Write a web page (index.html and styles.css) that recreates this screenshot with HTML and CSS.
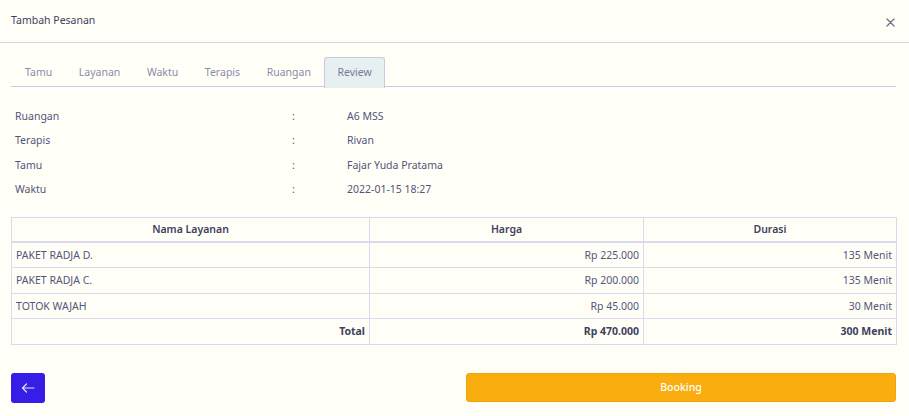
FILE: index.html
```html
<!DOCTYPE html>
<html>
<head>
<meta charset="utf-8">
<link rel="stylesheet" href="styles.css">
</head>
<body>
<div class="modal">
  <div class="modal-header">
    <span class="title">Tambah Pesanan</span>
    <span class="close">
      <svg width="9" height="9" viewBox="0 0 9 9"><path d="M1 1L8 8M8 1L1 8" stroke="#6f6d88" stroke-width="1.3" stroke-linecap="round"/></svg>
    </span>
  </div>
  <div class="modal-body">
    <ul class="tabs">
      <li class="tab">Tamu</li>
      <li class="tab">Layanan</li>
      <li class="tab">Waktu</li>
      <li class="tab">Terapis</li>
      <li class="tab">Ruangan</li>
      <li class="tab active">Review</li>
    </ul>
    <div class="info">
      <div class="row"><span class="lbl">Ruangan</span><span class="colon">:</span><span class="val">A6 MSS</span></div>
      <div class="row"><span class="lbl">Terapis</span><span class="colon">:</span><span class="val">Rivan</span></div>
      <div class="row"><span class="lbl">Tamu</span><span class="colon">:</span><span class="val">Fajar Yuda Pratama</span></div>
      <div class="row"><span class="lbl">Waktu</span><span class="colon">:</span><span class="val">2022-01-15 18:27</span></div>
    </div>
    <table class="tbl">
      <thead>
        <tr><th class="c1">Nama Layanan</th><th class="c2">Harga</th><th class="c3">Durasi</th></tr>
      </thead>
      <tbody>
        <tr><td>PAKET RADJA D.</td><td class="r">Rp 225.000</td><td class="r">135 Menit</td></tr>
        <tr><td>PAKET RADJA C.</td><td class="r">Rp 200.000</td><td class="r">135 Menit</td></tr>
        <tr><td>TOTOK WAJAH</td><td class="r">Rp 45.000</td><td class="r">30 Menit</td></tr>
        <tr class="total"><td class="r">Total</td><td class="r">Rp 470.000</td><td class="r">300 Menit</td></tr>
      </tbody>
    </table>
    <div class="actions">
      <button class="btn-back">
        <svg width="14" height="10" viewBox="0 0 14 10"><path d="M13 5H1.5M5.5 1L1.5 5L5.5 9" fill="none" stroke="#e8e4ff" stroke-width="1.2" stroke-linecap="round" stroke-linejoin="round"/></svg>
      </button>
      <button class="btn-book">Booking</button>
    </div>
  </div>
</div>
</body>
</html>
```
FILE: styles.css
```css
* { box-sizing: border-box; }
html, body { margin: 0; padding: 0; }
body {
  background: #fffff8;
  font-family: "Noto Sans", "Open Sans", sans-serif;
  font-size: 10.5px;
  color: #55557a;
  width: 909px;
  height: 416px;
  overflow: hidden;
}
.modal { width: 909px; }
.modal-header {
  height: 43px;
  border-bottom: 1px solid #d9d5ea;
  display: flex;
  align-items: center;
  justify-content: space-between;
  padding: 0 14px 0 11px;
}
.title { color: #3f3f5e; margin-top: -3px; }
.close { display: flex; margin-top: 2px; }
.modal-body { padding: 14px 13px 0 11px; }
.tabs {
  list-style: none;
  margin: 0;
  padding: 0;
  display: flex;
  height: 30px;
  border-bottom: 1px solid #cdc8e0;
}
.tab {
  padding: 0 12.3px;
  height: 30px;
  line-height: 28px;
  color: #8e8aa8;
  border: 1px solid transparent;
  border-bottom: none;
}
.tab:first-child { padding-left: 13px; }
.tab.active {
  background: #e7f0f0;
  border-color: #cdc8e0;
  border-radius: 3px 3px 0 0;
  color: #7c7897;
  height: 31px;
  margin-bottom: -1px;
}
.info { padding: 16.5px 0 0 4px; }
.row { display: flex; height: 24.5px; align-items: center; }
.lbl { width: 277px; }
.colon { width: 55px; }
.tbl {
  margin-top: 15px;
  width: 885px;
  border-collapse: collapse;
  table-layout: fixed;
}
.tbl th, .tbl td {
  border: 1px solid #dcd8ee;
  height: 25.5px;
  padding: 0 4px;
  font-weight: normal;
}
.tbl th {
  font-weight: 600;
  color: #3f3f5e;
  border-bottom: 2px solid #dcd8ee;
  height: 25px;
}
.c1 { width: 358px; }
.c2 { width: 274px; }
.c3 { width: 253px; }
.r { text-align: right; }
.total td { font-weight: 700; color: #3f3f5e; }
.actions {
  margin-top: 28px;
  display: flex;
  justify-content: space-between;
  align-items: flex-start;
}
.btn-back {
  width: 34px;
  height: 30px;
  background: #371ee6;
  border: none;
  border-radius: 3px;
  display: flex;
  align-items: center;
  justify-content: center;
  padding: 0;
}
.btn-book {
  width: 430px;
  height: 29px;
  background: #f9ad0f;
  border: 1px solid #eea60f;
  border-radius: 3px;
  color: #ffffff;
  font-family: "Noto Sans", "Open Sans", sans-serif;
  font-size: 10.5px;
  font-weight: 500;
  padding: 0;
}
```
